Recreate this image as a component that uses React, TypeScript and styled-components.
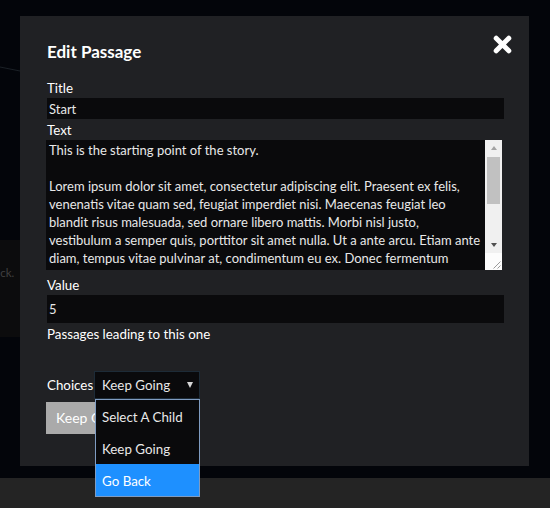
import React from "react";
import styled, { createGlobalStyle } from "styled-components";

const GlobalStyle = createGlobalStyle`
  html, body { margin: 0; padding: 0; background: #03050a; }
  body { font-family: Lato, "Open Sans", sans-serif; }
  *, *::before, *::after { box-sizing: border-box; }
`;

const Screen = styled.div`
  display: flex;
  flex-direction: column;
  width: 550px;
  height: 508px;
  overflow: hidden;
`;

const Stage = styled.main`
  position: relative;
  flex: 1;
  display: flex;
  align-items: flex-start;
  padding: 16px 21px 12px 20px;
  background: #03050a;
`;

const Footer = styled.footer`
  flex: 0 0 30px;
  background: #242424;
`;

const EdgeLine = styled.svg`
  position: absolute;
  left: 0;
  top: 60px;
  width: 20px;
  height: 16px;
`;

const GraphNode = styled.div`
  position: absolute;
  left: -100px;
  top: 240px;
  width: 140px;
  height: 97px;
  padding-top: 25px;
  background: #0c0c0d;
`;

const NodeSnippet = styled.div`
  width: 114px;
  text-align: right;
  white-space: nowrap;
  overflow: hidden;
  font-size: 11.5px;
  line-height: 16px;
  color: #404040;
`;

const Modal = styled.section`
  position: relative;
  z-index: 1;
  width: 509px;
  display: flex;
  flex-direction: column;
  padding: 23px 25px 32px 27px;
  background: #202124;
  color: #fff;
`;

const Header = styled.header`
  display: flex;
  justify-content: space-between;
  align-items: flex-start;
  margin-bottom: 14px;
`;

const Heading = styled.h2`
  margin: 0;
  padding-top: 1px;
  height: 24px;
  font-size: 17px;
  line-height: 23px;
  font-weight: 700;
  color: #fff;
`;

const CloseButton = styled.button`
  width: 19px;
  height: 19px;
  margin: -4px -8px 0 0;
  padding: 0;
  border: none;
  background: none;
  cursor: pointer;
  display: flex;
  svg { display: block; }
`;

const FieldLabel = styled.label`
  display: block;
  height: 21px;
  padding-top: 2px;
  font-size: 13.33px;
  line-height: 19px;
  color: #fff;
`;

const TextInput = styled.input<{ $tall?: boolean }>`
  display: block;
  width: 100%;
  height: ${(p) => (p.$tall ? 28 : 21)}px;
  padding: 0 2px;
  border: none;
  outline: none;
  background: #0a0a0c;
  color: #e8e8e8;
  font-family: Lato, "Open Sans", sans-serif;
  font-size: 13px;
`;

const TextAreaFrame = styled.div`
  display: flex;
  width: 456px;
  height: 130px;
  margin: 0 0 4px -1px;
  background: #0a0a0c;
`;

const TextArea = styled.textarea`
  flex: 1;
  height: 100%;
  padding: 1px 3px;
  border: none;
  outline: none;
  resize: none;
  overflow: hidden;
  background: transparent;
  color: #e8e8e8;
  font-family: Lato, "Open Sans", sans-serif;
  font-size: 13px;
  line-height: 18px;
`;

const ScrollRail = styled.div`
  flex: 0 0 17px;
  display: flex;
  flex-direction: column;
  background: #f0f0f0;
`;

const ScrollArrow = styled.div<{ $down?: boolean }>`
  flex: 0 0 17px;
  display: flex;
  align-items: center;
  justify-content: center;

  &::before {
    content: "";
    width: 0;
    height: 0;
    border-left: 3.5px solid transparent;
    border-right: 3.5px solid transparent;
    ${(p) =>
      p.$down
        ? "border-top: 4px solid #505050; margin-top: 1px;"
        : "border-bottom: 4px solid #a3a3a3; margin-bottom: 1px;"}
  }
`;

const ScrollTrack = styled.div`
  flex: 1;
  padding: 0 2px;
`;

const ScrollThumb = styled.div`
  height: 47px;
  background: #c1c1c1;
`;

const ResizeCorner = styled.div`
  flex: 0 0 17px;
  display: flex;
  align-items: flex-end;
  justify-content: flex-end;
  background: #fcfcfc;
  svg { display: block; }
`;

const PassageList = styled.ul`
  margin: 0;
  padding: 0;
  height: 27px;
  list-style: none;
`;

const ChoiceRow = styled.div`
  display: flex;
  align-items: center;
  height: 28px;
`;

const ChoiceLabel = styled.span`
  flex: 0 0 47px;
  font-size: 13.33px;
  color: #fff;
`;

const SelectBox = styled.div`
  position: relative;
  width: 106px;
  height: 28px;
`;

const SelectTrigger = styled.div`
  display: flex;
  align-items: center;
  justify-content: space-between;
  height: 100%;
  padding: 0 6px 0 7px;
  border: 1px solid #1d2b37;
  background: #0a0a0c;
  color: #e8e8e8;
  font-size: 13.33px;
`;

const Caret = styled.span`
  width: 0;
  height: 0;
  border-left: 3.5px solid transparent;
  border-right: 3.5px solid transparent;
  border-top: 6px solid #d6d6d6;
`;

const OptionList = styled.ul`
  position: absolute;
  top: 100%;
  left: 1px;
  right: 0;
  z-index: 2;
  margin: 0;
  padding: 0;
  list-style: none;
  border: 1px solid #7f9cc2;
  background: #0a0a0c;
`;

const OptionItem = styled.li<{ $active?: boolean }>`
  display: flex;
  align-items: center;
  height: 32px;
  padding: 2px 6px 0;
  font-size: 13.33px;
  color: ${(p) => (p.$active ? "#fff" : "#e8e8e8")};
  background: ${(p) => (p.$active ? "#1e90ff" : "transparent")};
`;

const ActionButton = styled.button`
  align-self: flex-start;
  height: 32px;
  margin: 3px 0 0 -1px;
  padding: 0 10px 1px;
  border: none;
  background: #aaaaaa;
  color: #fff;
  font-family: Lato, "Open Sans", sans-serif;
  font-size: 14px;
`;

const storyText = [
  "This is the starting point of the story.",
  "",
  "Lorem ipsum dolor sit amet, consectetur adipiscing elit. Praesent ex felis,",
  "venenatis vitae quam sed, feugiat imperdiet nisi. Maecenas feugiat leo",
  "blandit risus malesuada, sed ornare libero mattis. Morbi nisl justo,",
  "vestibulum a semper quis, porttitor sit amet nulla. Ut a ante arcu. Etiam ante",
  "diam, tempus vitae pulvinar at, condimentum eu ex. Donec fermentum",
  "ligula non nisl hendrerit, vel tincidunt lectus pretium. Nullam vitae",
  "sagittis lorem. Sed placerat, nisi at rhoncus iaculis, urna sem finibus",
  "dolor, non cursus nunc mi sit amet erat. Vivamus a dictum purus, eget",
  "posuere eros. Curabitur vel lacus vitae nisl pretium consequat.",
].join("\n");

const options = ["Select A Child", "Keep Going", "Go Back"];

export default function App() {
  return (
    <>
      <GlobalStyle />
      <Screen>
        <Stage>
          <EdgeLine viewBox="0 0 20 16">
            <path d="M0 7 L20 11" stroke="#1b2026" strokeWidth="1" fill="none" />
          </EdgeLine>
          <GraphNode>
            <NodeSnippet>Keep going or go back.</NodeSnippet>
          </GraphNode>
          <Modal>
            <Header>
              <Heading>Edit Passage</Heading>
              <CloseButton aria-label="Close">
                <svg width="19" height="19" viewBox="0 0 19 19">
                  <path d="M3.2 3.2 L15.8 15.8 M15.8 3.2 L3.2 15.8" stroke="#fff" strokeWidth="5" strokeLinecap="round" />
                </svg>
              </CloseButton>
            </Header>
            <FieldLabel htmlFor="title">Title</FieldLabel>
            <TextInput id="title" defaultValue="Start" />
            <FieldLabel htmlFor="text">Text</FieldLabel>
            <TextAreaFrame>
              <TextArea id="text" defaultValue={storyText} />
              <ScrollRail>
                <ScrollArrow />
                <ScrollTrack>
                  <ScrollThumb />
                </ScrollTrack>
                <ScrollArrow $down />
                <ResizeCorner>
                  <svg width="17" height="17" viewBox="0 0 17 17">
                    <path d="M15.5 8.5 L8.5 15.5 M15.5 12.5 L12.5 15.5" stroke="#9a9a9a" strokeWidth="1" />
                  </svg>
                </ResizeCorner>
              </ScrollRail>
            </TextAreaFrame>
            <FieldLabel htmlFor="value">Value</FieldLabel>
            <TextInput id="value" $tall defaultValue="5" />
            <FieldLabel as="div">Passages leading to this one</FieldLabel>
            <PassageList />
            <ChoiceRow>
              <ChoiceLabel>Choices</ChoiceLabel>
              <SelectBox>
                <SelectTrigger>
                  <span>Keep Going</span>
                  <Caret />
                </SelectTrigger>
                <OptionList>
                  {options.map((o) => (
                    <OptionItem key={o} $active={o === "Go Back"}>
                      {o}
                    </OptionItem>
                  ))}
                </OptionList>
              </SelectBox>
            </ChoiceRow>
            <ActionButton>Keep Going</ActionButton>
          </Modal>
        </Stage>
        <Footer />
      </Screen>
    </>
  );
}
